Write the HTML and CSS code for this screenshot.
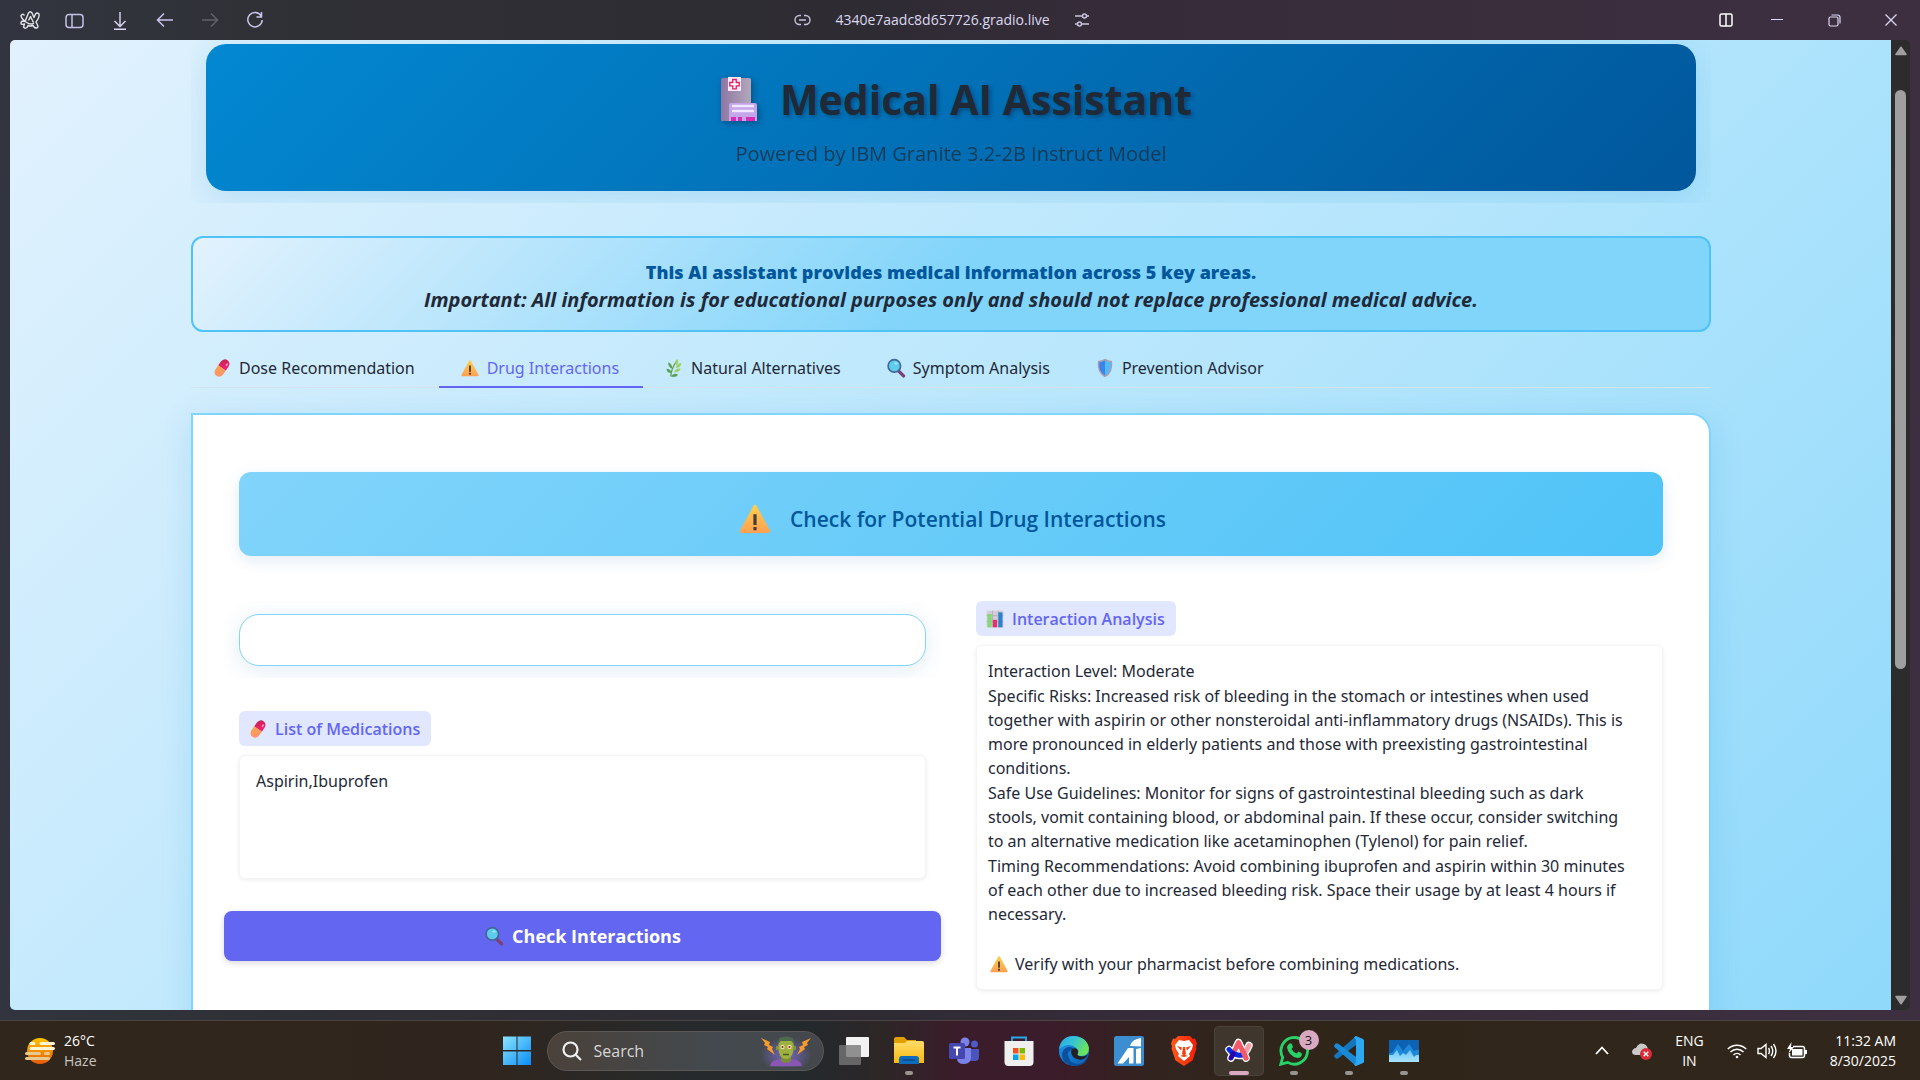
FILE: index.html
```html
<!DOCTYPE html>
<html lang="en">
<head>
<meta charset="utf-8">
<title>Medical AI Assistant</title>
<link rel="stylesheet" href="styles.css">
</head>
<body>
<svg class="sprite" aria-hidden="true">
  <defs>
    <linearGradient id="pillRed" x1="0" y1="0" x2="1" y2="1"><stop offset="0" stop-color="#b8274f"/><stop offset="1" stop-color="#ff1f74"/></linearGradient>
    <linearGradient id="pillOrange" x1="0" y1="0" x2="1" y2="1"><stop offset="0" stop-color="#f9a44a"/><stop offset="1" stop-color="#ff8f75"/></linearGradient>
    <linearGradient id="warn" x1="0" y1="0" x2="0" y2="1"><stop offset="0" stop-color="#fbd04f"/><stop offset="1" stop-color="#ffa050"/></linearGradient>
    <linearGradient id="win" x1="0" y1="0" x2="1" y2="1"><stop offset="0" stop-color="#8be4ff"/><stop offset="1" stop-color="#0a8cf5"/></linearGradient>
    <linearGradient id="sun" x1="0" y1="0" x2="0" y2="1"><stop offset="0" stop-color="#ffc400"/><stop offset="1" stop-color="#e65a08"/></linearGradient>
    <linearGradient id="folder" x1="0" y1="0" x2="0" y2="1"><stop offset="0" stop-color="#ffdc6b"/><stop offset="1" stop-color="#f7b80d"/></linearGradient>
    <linearGradient id="edgeTop" x1="0" y1="0" x2="1" y2="0.4"><stop offset="0" stop-color="#2aa6e4"/><stop offset="0.5" stop-color="#35c3d8"/><stop offset="1" stop-color="#6be35a"/></linearGradient>
    <linearGradient id="edgeLow" x1="0" y1="0" x2="1" y2="1"><stop offset="0" stop-color="#1d9bea"/><stop offset="1" stop-color="#0b5cb4"/></linearGradient>
    <linearGradient id="building" x1="0" y1="0" x2="1" y2="0"><stop offset="0" stop-color="#8d76a3"/><stop offset="1" stop-color="#b3a8bb"/></linearGradient>
    <linearGradient id="brave" x1="0" y1="0" x2="1" y2="0"><stop offset="0" stop-color="#ff5a1c"/><stop offset="1" stop-color="#f01c05"/></linearGradient>
    <linearGradient id="water" x1="0" y1="0" x2="0" y2="1"><stop offset="0" stop-color="#6cc8f8"/><stop offset="1" stop-color="#a9e4ff"/></linearGradient>
    <radialGradient id="glow"><stop offset="0" stop-color="#7a6ad0" stop-opacity="0.9"/><stop offset="1" stop-color="#7a6ad0" stop-opacity="0"/></radialGradient>
  </defs>
  <symbol id="i-pill" viewBox="0 0 24 24">
    <g transform="rotate(35 12 12)">
      <path d="M6.500 12V6a5.500 5.500 0 0 1 11 0V12z" fill="url(#pillRed)"/>
      <path d="M6.500 12v6a5.500 5.500 0 0 0 11 0V12z" fill="url(#pillOrange)"/>
      <ellipse cx="14.500" cy="5.500" rx="1.200" ry="2" fill="#ff8fb8"/>
    </g>
  </symbol>
  <symbol id="i-warn" viewBox="0 0 24 24">
    <path d="M10.800 3.500q1.200-2 2.400 0l9 16.500q.8 2-1.200 2H3q-2 0-1.200-2z" fill="url(#warn)"/>
    <path d="M10.900 9h2.200v7.500h-2.200zM10.900 17.800h2.200v2.200h-2.200z" fill="#4a3a3c"/>
  </symbol>
  <symbol id="i-herb" viewBox="0 0 24 24">
    <path d="M8 22Q9 12 15 4" fill="none" stroke="#6aa046" stroke-width="1.500"/>
    <g fill="#9ad05c"><path d="M15 9q-3-4 1-8 2 5-1 8zM14 12q2-6 7-6-1 6-7 6zM12 17q3-6 8-4-2 5-8 4z"/></g>
    <g fill="#58a05a"><path d="M10 13Q5 11 5 5q5 2 5 8zM9 18q-6 0-6-5 5 0 6 5zM8 22q4-5 9-2-3 4-9 2z"/></g>
  </symbol>
  <symbol id="i-search" viewBox="0 0 24 24">
    <path d="M15 15.500l6 6" stroke="#7c4076" stroke-width="4" stroke-linecap="round"/>
    <circle cx="10" cy="9.500" r="7.500" fill="#5fcbea" stroke="#44659a" stroke-width="2"/>
    <ellipse cx="12" cy="6.500" rx="2" ry="1.400" fill="#9be8f8"/>
  </symbol>
  <symbol id="i-shield" viewBox="0 0 24 24">
    <path d="M12 1q4 2.500 8.500 2.500 2 14-8.500 19.500Q1.500 17.500 3.500 3.500q4.500 0 8.500-2.500z" fill="#a79fb0"/>
    <path d="M12 3v18Q4 16.500 5 5q3.500 0 7-2z" fill="#3d83ec"/>
    <path d="M12 3v18q8-4.500 7-16-3.500 0-7-2z" fill="#54b9f8"/>
  </symbol>
  <symbol id="i-chart" viewBox="0 0 24 24">
    <path d="M2 2h20v20H2z" fill="#d4cdd8"/><path d="M2 8h20M2 15h20M9 2v20M16 2v20" stroke="#b4abb9"/>
    <path d="M3 6h5v16H3z" fill="#86d873"/><path d="M9.500 13h5v9h-5z" fill="#e8306c"/><path d="M16 4h5v18h-5z" fill="#2b83cf"/>
  </symbol>
</svg>

<div class="browser">
  <header class="toolbar">
    <nav class="tools" aria-label="Browser">
      <button class="tool" aria-label="Arc"><svg width="22" height="20" viewBox="0 0 22 20" fill="none" stroke="#e4e4ea" stroke-width="1.400" stroke-linejoin="round"><path d="M2 13.500q0-2.500 2-2.500l2 .5L9.500 3q1.700-2.500 3.500 0l2 4.500 1.500-3.500q1.500-2 3.500 0 .8 3-3 8l2 4q0 3-3.500 1.500L14 15.500q-3 1-5 0l-1 2q-2 1.500-3.500-.5l1-3Q2 15 2 13.500zM5.500 5.500Q4 3 2 5.500q0 3 5 6.500t8 1M9.500 10.500l2-4 3 6"/></svg></button>
      <button class="tool" aria-label="Sidebar"><svg width="20" height="20" viewBox="0 0 20 20" fill="none" stroke="#c5c0e6" stroke-width="1.500"><rect x="1" y="4.500" width="17" height="13" rx="3"/><path d="M7 4.500v13"/></svg></button>
      <button class="tool" aria-label="Downloads"><svg width="20" height="20" viewBox="0 0 20 20" fill="none" stroke="#dcd8f4" stroke-width="1.400"><path d="M10 2v14M4.500 11l5.500 5.500 5.500-5.500M4 19.300h12"/></svg></button>
      <button class="tool" aria-label="Back"><svg width="20" height="20" viewBox="0 0 20 20" fill="none" stroke="#c9c4ea" stroke-width="1.500"><path d="M18 10H3M9 3.500L2.500 10 9 16.500"/></svg></button>
      <button class="tool" aria-label="Forward" disabled><svg width="20" height="20" viewBox="0 0 20 20" fill="none" stroke="#62616b" stroke-width="1.500"><path d="M2 10h15M11 3.500l6.500 6.500-6.500 6.500"/></svg></button>
      <button class="tool" aria-label="Reload"><svg width="20" height="20" viewBox="0 0 20 20" fill="none" stroke="#c9c4ea" stroke-width="1.500"><path d="M16.200 6A7.200 7.200 0 1 0 17.200 10M16.500 2v5h-5"/></svg></button>
    </nav>
    <div class="address">
      <svg width="17" height="12" viewBox="0 0 17 12" fill="none" stroke="#c9c4dc" stroke-width="1.400"><path d="M7 1.500H5.500a4.500 4.500 0 0 0 0 9H7M10 1.500h1.500a4.500 4.500 0 0 1 0 9H10M5 6h7"/></svg>
      <span class="url">4340e7aadc8d657726.gradio.live</span>
      <svg width="16" height="14" viewBox="0 0 16 14" fill="none" stroke="#c9c4dc" stroke-width="1.500"><path d="M1 3h7M13 3h2M1 11h2M8 11h7"/><circle cx="10.500" cy="3" r="2"/><circle cx="5.500" cy="11" r="2"/></svg>
    </div>
    <div class="window-controls">
      <button class="tool split" aria-label="Split view"><svg width="14" height="14" viewBox="0 0 14 14" fill="none" stroke="#fff" stroke-width="1.500"><rect x="1" y="1" width="12" height="12" rx="1.500"/><path d="M7 1v12"/></svg></button>
      <button class="tool" aria-label="Minimize"><svg width="12" height="12" viewBox="0 0 12 12" stroke="#dcd8f4"><path d="M0 5.500h12"/></svg></button>
      <button class="tool" aria-label="Restore"><svg width="13" height="13" viewBox="0 0 13 13" fill="none" stroke="#dcd8f4" stroke-width="1.200"><rect x="1" y="3" width="9" height="9" rx="1.500"/><path d="M3.500 1h6q2.500 0 2.500 2.500v6"/></svg></button>
      <button class="tool" aria-label="Close"><svg width="12" height="12" viewBox="0 0 12 12" stroke="#dcd8f4" stroke-width="1.300"><path d="M.5.5l11 11M11.500.5l-11 11"/></svg></button>
    </div>
  </header>

  <div class="viewport">
    <main class="page">
      <div class="container">
        <div class="hero-wrap">
          <div class="hero">
            <h1 class="hero-title">
              <svg class="hospital" width="52" height="44" viewBox="-9 0 52 44">
                <path d="M2 3q0-2 2-2h26q2 0 2 2v41H2z" fill="url(#building)"/>
                <path d="M9 0h13v14H9z" fill="#f6e9fb"/>
                <path d="M13.800 2.500h3.400v3h3v3.400h-3v3h-3.400v-3h-3V5.500h3z" fill="#fff" stroke="#e5195a" stroke-width="1.300"/>
                <path d="M10 28q0-2 2-2h24q2 0 2 2v16H10z" fill="#c5a5ea"/>
                <path d="M13 29h22M13 34h22" stroke="#f0e6ff" stroke-width="2.500"/>
                <path d="M12 40h5v4h-5zM19 40h4v4h-4zM27 40h9v4h-9z" fill="#d92bb4"/>
              </svg>
              <span>Medical AI Assistant</span>
            </h1>
            <p class="hero-sub">Powered by IBM Granite 3.2-2B Instruct Model</p>
          </div>
        </div>

        <div class="notice">
          <strong class="notice-main">This AI assistant provides medical information across 5 key areas.</strong>
          <em class="notice-warn">Important: All information is for educational purposes only and should not replace professional medical advice.</em>
        </div>

        <div class="tabs" role="tablist">
          <button class="tab" role="tab"><svg class="emoji"><use href="#i-pill"/></svg>Dose Recommendation</button>
          <button class="tab active" role="tab" aria-selected="true"><svg class="emoji"><use href="#i-warn"/></svg>Drug Interactions</button>
          <button class="tab" role="tab"><svg class="emoji"><use href="#i-herb"/></svg>Natural Alternatives</button>
          <button class="tab" role="tab"><svg class="emoji"><use href="#i-search"/></svg>Symptom Analysis</button>
          <button class="tab" role="tab"><svg class="emoji"><use href="#i-shield"/></svg>Prevention Advisor</button>
        </div>

        <section class="panel" role="tabpanel">
          <h2 class="band"><svg class="band-icon"><use href="#i-warn"/></svg><span>Check for Potential Drug Interactions</span></h2>
          <div class="columns">
            <div class="column">
              <div class="group-wrap"><div class="group"></div></div>
              <div class="field">
                <label class="badge" for="meds"><svg class="emoji"><use href="#i-pill"/></svg>List of Medications</label>
                <textarea class="input" id="meds">Aspirin,Ibuprofen</textarea>
              </div>
              <button class="primary"><svg class="emoji"><use href="#i-search"/></svg>Check Interactions</button>
            </div>
            <div class="column">
              <div class="field result">
                <label class="badge" for="analysis"><svg class="emoji"><use href="#i-chart"/></svg>Interaction Analysis</label>
                <output class="output" id="analysis">
                  <span class="para">Interaction Level: Moderate</span>
                  <span class="para">Specific Risks: Increased risk of bleeding in the stomach or intestines when used together with aspirin or other nonsteroidal anti-inflammatory drugs (NSAIDs). This is more pronounced in elderly patients and those with preexisting gastrointestinal conditions.</span>
                  <span class="para">Safe Use Guidelines: Monitor for signs of gastrointestinal bleeding such as dark stools, vomit containing blood, or abdominal pain. If these occur, consider switching to an alternative medication like acetaminophen (Tylenol) for pain relief.</span>
                  <span class="para">Timing Recommendations: Avoid combining ibuprofen and aspirin within 30 minutes of each other due to increased bleeding risk. Space their usage by at least 4 hours if necessary.</span>
                  <span class="para verify"><svg class="emoji"><use href="#i-warn"/></svg>Verify with your pharmacist before combining medications.</span>
                </output>
              </div>
            </div>
          </div>
        </section>
      </div>
    </main>
    <div class="scrollbar" aria-hidden="true">
      <svg width="12" height="10" viewBox="0 0 12 10"><path d="M6 1.200l5 7.300H1z" fill="#9f9f9f" stroke="#9f9f9f" stroke-width="1.500" stroke-linejoin="round"/></svg>
      <div class="track"><div class="thumb"></div></div>
      <svg width="12" height="10" viewBox="0 0 12 10"><path d="M6 8.800l5-7.300H1z" fill="#9f9f9f" stroke="#9f9f9f" stroke-width="1.500" stroke-linejoin="round"/></svg>
    </div>
  </div>
</div>

<footer class="taskbar">
  <button class="weather">
    <svg width="30" height="28" viewBox="0 0 30 28"><circle cx="15" cy="14" r="13" fill="url(#sun)"/><g stroke-width="3" stroke-linecap="round"><path d="M6 6.500h3M16 6.500h12.500M6 11.500h22.500" stroke="#fff4d4"/><path d="M1.500 16.500h13M20.500 16.500h3M1.500 21.500h22" stroke="#e6c98c"/></g></svg>
    <span class="weather-text"><span>26°C</span><span class="dim">Haze</span></span>
  </button>

  <nav class="apps" aria-label="Taskbar">
    <button class="app" aria-label="Start"><svg width="30" height="30" viewBox="0 0 30 30"><path d="M1 .5h13.500V14H1zM15.500.5H29V14H15.500zM1 15.500h13.500V29H1zM15.500 15.500H29V29H15.500z" fill="url(#win)"/></svg></button>
    <div class="search">
      <svg width="20" height="20" viewBox="0 0 20 20" fill="none" stroke="#f0f0f0" stroke-width="2.200"><circle cx="8.500" cy="8.500" r="7"/><path d="M13.500 13.500L19 19"/></svg>
      <input class="search-input" type="text" aria-label="Search" placeholder="Search">
      <svg width="50" height="32" viewBox="0 0 50 32">
        <ellipse cx="25" cy="20" rx="26" ry="18" fill="url(#glow)"/>
        <path d="M9 31q1-7 12-7h8q11 0 12 7z" fill="#8a56b4"/>
        <path d="M20 18h10v8q-5 4-10 0z" fill="#7a8c35"/>
        <path d="M18 5q7-4 14 0l1 8-1.500 6q-2 5-6.500 5t-6.500-5L17 13z" fill="#a0b040"/>
        <path d="M17.500 9l.5-6q7-3 14 0l.5 6-2-3h-11z" fill="#4d6a4e"/>
        <path d="M15 11h2.500v4H15zM32.500 11H35v4h-2.500z" fill="#7f9436"/>
        <circle cx="21.500" cy="12" r="2.200" fill="#e9e0b0"/><circle cx="28.500" cy="12" r="2.200" fill="#e9e0b0"/><circle cx="21.500" cy="12" r="1" fill="#8a2b20"/><circle cx="28.500" cy="12" r="1" fill="#8a2b20"/>
        <path d="M22 19.500h6" stroke="#4d5a20" stroke-width="1.500"/>
        <path d="M0 3l9 4-1 3 4 2-1 2 3 6-8-6 1-2-4-2 1-2zM50 3l-9 4 1 3-4 2 1 2-3 6 8-6-1-2 4-2-1-2z" fill="#f79a2c"/>
      </svg>
    </div>
    <button class="app" aria-label="Task view"><svg width="30" height="28" viewBox="0 0 30 28"><rect x="7" width="23" height="20" rx="1" fill="#f2f2f2"/><rect y="8" width="22" height="20" rx="1" fill="#777" fill-opacity=".8"/></svg></button>
    <button class="app running" aria-label="File Explorer"><svg width="30" height="28" viewBox="0 0 30 28"><path d="M0 2q0-2 2-2h8l3 3h9v6H0z" fill="#dfa000"/><path d="M0 6h11l2-2h15q2 0 2 2v20H0z" fill="url(#folder)"/><path d="M5 27v-5q0-3 3-3h14q3 0 3 3v5z" fill="#0f6cbd"/><path d="M9 23h12" stroke="#0a4a86" stroke-width="1.500"/></svg></button>
    <button class="app" aria-label="Teams"><svg width="30" height="28" viewBox="0 0 30 28"><circle cx="25.500" cy="7" r="3.500" fill="#5059c9"/><path d="M20 12h10v8q0 4-4 4h-6z" fill="#4b53bc"/><circle cx="16" cy="5" r="4.500" fill="#7b83eb"/><path d="M8 11h14v9q0 7-7 7t-7-6z" fill="#7b83eb"/><rect y="6" width="16" height="16" rx="1.500" fill="#4448b0"/><path d="M4.500 10.500h7M8 10.500v8" stroke="#fff" stroke-width="2"/></svg></button>
    <button class="app" aria-label="Microsoft Store"><svg width="30" height="30" viewBox="0 0 30 30"><path d="M8 6V1.500h14V6" fill="none" stroke="#29a9ea" stroke-width="1.800"/><path d="M.5 5h29v21q0 4-4 4h-21q-4 0-4-4z" fill="#efefef"/><path d="M9 12h5.500v5.500H9z" fill="#f05022"/><path d="M15.500 12H21v5.500h-5.500z" fill="#7fba00"/><path d="M9 18.500h5.500V24H9z" fill="#00a4ef"/><path d="M15.500 18.500H21V24h-5.500z" fill="#ffb900"/></svg></button>
    <button class="app" aria-label="Edge"><svg width="30" height="30" viewBox="0 0 30 30"><circle cx="15" cy="15" r="15" fill="url(#edgeLow)"/><path d="M9 17q0 10 9 11 6 0 10-4-4 6-13 6Q3 28 3 19q0-6 6-8 6 0 8 3-6-1-8 3z" fill="#0c4f9e"/><path d="M0 13Q2 0 15 0q13 1 15 12 0 8-8 8-5 0-4-3 2-3-2-6-7-5-16 2z" fill="url(#edgeTop)"/><path d="M12 15q2-4 6-2 2 2 1 4-2 3 4 3.500 4 0 6-2-3 6-9 5-8-1-8-8.500z" fill="#241f24"/></svg></button>
    <button class="app" aria-label="Analytics"><svg width="30" height="30" viewBox="0 0 30 30"><rect width="30" height="30" rx="2.500" fill="#3d8ed0"/><path d="M16 10q2-7 11-8v8.500zM3.500 27.500L14 12h5.500v15.500H15V21L9 27.500zM22 13l5-1v15.500h-5z" fill="#fff"/></svg></button>
    <button class="app" aria-label="Brave"><svg width="26" height="30" viewBox="0 0 26 30"><path d="M7 0h12l3 3 2-.5 2 5-1 3 .5 2-4 12-8.500 5.500L4.500 24.500l-4-12 .5-2-1-3 2-5 2 .5z" fill="url(#brave)"/><path d="M8 4l5 1 5-1 4 5-1 4-3 5 1 2-6 5-6-5 1-2-3-5-1-4z" fill="#fff"/><path d="M6 10l5 1.500-1 3zM20 10l-5 1.500 1 3zM12 11h2l1 7-2 1.500-2-1.500zM9 20l4-1.500 4 1.500-4 1z" fill="#f4400f"/></svg></button>
    <button class="app current" aria-label="Arc"><svg width="28" height="25" viewBox="0 0 28 25" fill="none" stroke-linecap="round" stroke-linejoin="round"><path d="M6 20L13.500 4.500 21 20M4 11.500q4 6 10 6 6 0 10-10" stroke="#fff" stroke-width="7.500"/><path d="M14 17.500Q20 17 24 7.500" stroke="#f99ba2" stroke-width="5"/><path d="M8.500 15L13.500 4.500 21 20" stroke="#f4596b" stroke-width="5"/><path d="M4 11.500q5 6.500 13 5.500" stroke="#0a2be0" stroke-width="5"/><path d="M8 16L6 20" stroke="#2a06a8" stroke-width="5"/><path d="M17.500 12.500L21 20" stroke="#f4596b" stroke-width="5"/></svg></button>
    <button class="app running" aria-label="WhatsApp, 3 unread"><svg width="30" height="30" viewBox="0 0 30 30"><path d="M1.800 28.200l1.900-6.800a13.300 13.300 0 1 1 5 5z" fill="none" stroke="#27d366" stroke-width="2.800"/><path d="M10 8q2-1.500 3 .5l1 2.500-1.500 2q1.500 3 5 4.500l2-2q3 1 3.500 2.500-.5 4-4.500 4-9-2-10.500-10.500Q8 9.500 10 8z" fill="#27d366"/></svg><span class="count">3</span></button>
    <button class="app running" aria-label="Visual Studio Code"><svg width="30" height="30" viewBox="0 0 30 30"><path d="M22 0v9L4 22.500q-1.500.8-2.500-.3L.5 21q-1-1.200.2-2.300z" fill="#1476bd"/><path d="M22 30v-9L4 7.500Q2.500 6.700 1.500 7.800L.5 9q-1 1.200.2 2.300z" fill="#1b8ad6"/><path d="M22 0l7 3q1 .5 1 1.500v21q0 1-1 1.500l-7 3q-1 0-2-1.500l2-2V3.500l-2-2Q21 0 22 0z" fill="#2da9f2"/></svg></button>
    <button class="app running" aria-label="Performance Monitor"><svg width="30" height="22" viewBox="0 0 30 22"><path d="M0 0h30v22H0z" fill="#0d62b4"/><path d="M0 13h3l6-9 5 7 6-7 5 7 2-1h3v12H0z" fill="#1e88d8"/><path d="M0 15h4l4-5 3 6 3-3 3 2 4-5 4 7 2-2h3v7H0z" fill="url(#water)"/></svg></button>
  </nav>

  <div class="tray">
    <button class="tray-item" aria-label="Hidden icons"><svg width="14" height="9" viewBox="0 0 14 9" fill="none" stroke="#fff" stroke-width="1.800"><path d="M1 8l6-6.500L13 8"/></svg></button>
    <button class="tray-item" aria-label="OneDrive"><svg width="20" height="18" viewBox="0 0 20 18"><path d="M4 13Q0 13 0 9.500 1 6 4 6 7 0 12 2q3 1 4 5v6z" fill="#c9c9c9"/><circle cx="14" cy="12" r="6" fill="#d92c38"/><path d="M11.700 9.700l4.600 4.600M16.300 9.700l-4.600 4.600" stroke="#fff" stroke-width="1.300"/></svg></button>
    <button class="tray-item lang"><span>ENG</span><span>IN</span></button>
    <button class="tray-item system" aria-label="Network, volume and battery">
      <svg width="20" height="16" viewBox="0 0 20 16" fill="none" stroke="#fff" stroke-width="1.500"><path d="M.8 6a13 13 0 0 1 18.400 0M3.500 9a9 9 0 0 1 13 0M6.500 12a5 5 0 0 1 7 0"/><circle cx="10" cy="14" r="1.300" fill="#fff" stroke="none"/></svg>
      <svg width="20" height="18" viewBox="0 0 20 18" fill="none" stroke="#fff" stroke-width="1.400"><path d="M1 6.500v5h3l5 4v-13l-5 4zM11.500 6q2 3 0 6M14 4q3.500 5 0 10M16.500 2q5 7 0 14"/></svg>
      <svg width="20" height="18" viewBox="0 0 20 18"><path d="M6 4.500h9.500q2 0 2 2v7q0 2-2 2h-11q-2 0-2-2V11" fill="none" stroke="#fff" stroke-width="1.500"/><path d="M5 7h10.500v6.500H5zM18 8h2v4h-2z" fill="#fff"/><path d="M4.500 0L0 7h3l-1.500 4.500L7 5H4z" fill="#fff"/></svg>
    </button>
    <button class="tray-item clock"><span>11:32 AM</span><span>8/30/2025</span></button>
  </div>
</footer>
</body>
</html>
```
FILE: styles.css
```css
* { box-sizing: border-box; }

body {
  margin: 0;
  height: 100vh;
  display: flex;
  flex-direction: column;
  overflow: hidden;
  font-family: "Open Sans", "Noto Sans", sans-serif;
  font-size: 16px;
  color: #1f2937;
}

button, input, textarea { font: inherit; color: inherit; }
button { border: 0; padding: 0; background: none; }
h1, h2, p { margin: 0; }
svg { display: block; flex: none; }
.sprite { width: 0; height: 0; position: absolute; }
.emoji { width: 20px; height: 20px; }

/* Browser window */
.browser {
  flex: 1;
  min-height: 0;
  display: flex;
  flex-direction: column;
  padding: 0 10px 10px;
  background: linear-gradient(90deg, #32353f 0%, #2f3035 16%, #2e2b33 45%, #362c39 60%, #3d2f40 100%);
}

.toolbar {
  height: 40px;
  flex: none;
  display: grid;
  grid-template-columns: 1fr auto 1fr;
  align-items: center;
}

.tools { display: flex; gap: 25px; padding-left: 10px; }
.tool { display: flex; align-items: center; justify-content: center; width: 20px; height: 40px; }
.address { display: flex; align-items: center; gap: 24px; padding-right: 36px; }
.url { color: #dcd8f0; font-size: 14px; line-height: 20px; }
.window-controls { display: flex; justify-content: flex-end; gap: 37px; padding-right: 9px; }
.split { margin-right: -6px; }

.viewport {
  flex: 1;
  min-height: 0;
  display: flex;
  overflow: hidden;
  border-radius: 5px;
}

.page {
  flex: 1;
  min-width: 0;
  overflow: hidden;
  background: linear-gradient(135deg, #e3f2fd 0%, #b3e5fc 50%, #81d4fa 100%) 0 -55px / 100% 1500px;
}

.container { padding: 0 180px 0 181px; }

.scrollbar {
  width: 19px;
  display: flex;
  flex-direction: column;
  align-items: center;
  padding: 6px 0 5px;
  background: #2c2c2c;
}
.track { flex: 1; padding-top: 34px; }
.thumb { width: 11px; height: 64%; border-radius: 6px; background: #9f9f9f; }

/* Header */
.hero-wrap { padding: 4px 15px 12px; overflow: hidden; }
.hero {
  padding: 24px 20px 21px;
  border-radius: 20px;
  background: linear-gradient(135deg, #0288d1, #01579b);
  box-shadow: 0 8px 32px rgba(2, 136, 209, 0.15);
  text-align: center;
}
.hero-title {
  display: flex;
  justify-content: center;
  align-items: center;
  gap: 18px;
  font-size: 41px;
  line-height: 62px;
  text-shadow: 2px 2px 4px rgba(0, 0, 0, 0.3);
}
.hospital { filter: drop-shadow(2px 2px 3px rgba(0, 0, 0, 0.3)); }
.hero-sub { padding-top: 8px; font-size: 20px; line-height: 32px; opacity: 0.75; }

.notice {
  margin-top: 33px;
  padding: 20px 20px 16px;
  border: 2px solid #4fc3f7;
  border-radius: 12px;
  background: linear-gradient(135deg, #e3f2fd 0%, #81d4fa 50%);
  line-height: 28px;
  font-weight: 700;
  text-align: center;
}
.notice-main, .notice-warn { display: block; }
.notice-main { color: #01579b; font-size: 18px; }
.notice-warn { font-size: 20px; }

/* Tabs */
.tabs {
  display: flex;
  margin-top: 16px;
  box-shadow: inset 0 -1px #d5e2ee;
}
.tab {
  display: flex;
  align-items: center;
  gap: 7px;
  height: 40px;
  padding: 2px 24px 0 21px;
  border-bottom: 2px solid transparent;
  font-family: "Noto Sans", "Open Sans", sans-serif;
  font-size: 16px;
}
.tab.active { color: #6366f1; border-bottom-color: #6366f1; }

/* Tab panel */
.panel {
  margin-top: 25px;
  min-height: 800px;
  padding: 57px 31px 40px;
  border: 2px solid #81d4fa;
  border-radius: 0 20px 20px 20px;
  background: #fff;
  box-shadow: 0 8px 32px rgba(2, 136, 209, 0.15);
}
.band {
  display: flex;
  align-items: center;
  justify-content: center;
  gap: 16px;
  height: 84px;
  margin: 0 15px;
  padding-top: 9px;
  border-radius: 12px;
  background: linear-gradient(135deg, #81d4fa, #4fc3f7);
  box-shadow: 0 4px 16px rgba(1, 87, 155, 0.12);
  color: #01579b;
  font-size: 21px;
  font-weight: 600;
}
.band-icon { width: 38px; height: 35px; }

.columns { display: grid; grid-template-columns: 1fr 1fr; gap: 20px; padding-top: 45px; }
.column { display: flex; flex-direction: column; min-width: 0; }

.group-wrap { padding: 13px 15px 12px; overflow: hidden; }
.group {
  height: 52px;
  border: 1px solid #81d4fa;
  border-radius: 20px;
  background: #fff;
  box-shadow: 0 4px 24px rgba(2, 100, 180, 0.12);
}

.field { display: flex; flex-direction: column; align-items: flex-start; gap: 9px; padding: 0 15px; }
.column > .group-wrap + .field { padding-top: 33px; }

.badge {
  display: flex;
  align-items: center;
  gap: 7px;
  height: 35px;
  padding: 0 11px 0 9px;
  border-radius: 6px;
  background: #e0e7ff;
  color: #6366f1;
  font-size: 16px;
  font-weight: 600;
}

.input, .output {
  display: block;
  width: 100%;
  border: 1px solid #f5f5f7;
  border-radius: 6px;
  background: #fff;
  box-shadow: 0 1px 4px rgba(0, 0, 0, 0.08);
  font-family: "Noto Sans", "Open Sans", sans-serif;
  font-size: 16px;
  line-height: 24px;
}
.input { height: 124px; padding: 13px 16px; resize: none; }
.output { padding: 13px 31px 13px 11px; }
.para { display: block; margin-bottom: 1px; }
.para.verify { display: flex; align-items: center; gap: 6px; margin: 26px 0 0 1px; }

.primary {
  display: flex;
  align-items: center;
  justify-content: center;
  gap: 8px;
  height: 50px;
  margin-top: 32px;
  border-radius: 8px;
  background: #6366f1;
  box-shadow: 0 2px 6px rgba(0, 0, 0, 0.15);
  color: #fff;
  font-size: 18px;
  font-weight: 700;
}

/* Taskbar */
.taskbar {
  height: 60px;
  flex: none;
  display: grid;
  grid-template-columns: 1fr auto 1fr;
  align-items: center;
  border-top: 1px solid #4a4444;
  background: linear-gradient(90deg, #30261b 0%, #30251e 25%, #262a2c 36%, #24292c 42%, #2d2627 46%, #3b1c2a 50%, #3b1c2a 55%, #32231f 60%, #2f2519 68%, #30261b 100%);
  color: #fff;
  font-size: 14px;
  line-height: 20px;
}

.weather { display: flex; align-items: center; gap: 9px; padding-left: 25px; text-align: left; }
.weather-text { display: flex; flex-direction: column; }
.dim { color: #c8c4c0; }

.apps { display: flex; align-items: center; gap: 5px; }
.app {
  position: relative;
  display: flex;
  align-items: center;
  justify-content: center;
  width: 50px;
  height: 50px;
  border-radius: 5px;
}
.app.running::after, .app.current::after {
  content: "";
  position: absolute;
  left: 50%;
  bottom: 1px;
  width: 8px;
  height: 4px;
  margin-left: -4px;
  border-radius: 2px;
  background: #9a9490;
}
.app.current { background: #3f362d; box-shadow: inset 0 0 0 1px #4a4138; }
.app.current::after { width: 20px; margin-left: -10px; background: #d9a9c2; }
.count {
  position: absolute;
  top: 4px;
  right: 0;
  width: 20px;
  height: 20px;
  border-radius: 50%;
  background: #d9a9c2;
  color: #1d1418;
  font-size: 13px;
  line-height: 20px;
}

.search {
  display: flex;
  align-items: center;
  gap: 12px;
  width: 277px;
  height: 40px;
  padding: 0 12px 0 14px;
  border: 1px solid #5c5855;
  border-radius: 20px;
  background: linear-gradient(90deg, #4a413a, #43494e 60%, #44484c);
}
.search-input {
  flex: 1;
  min-width: 0;
  padding: 0;
  border: 0;
  outline: 0;
  background: none;
  font-size: 16px;
}
.search-input::placeholder { color: #d8d6d4; opacity: 1; }

.tray { display: flex; align-items: center; justify-content: flex-end; padding-right: 24px; }
.tray-item { display: flex; align-items: center; }
.tray-item + .tray-item { margin-left: 23px; }
.lang { flex-direction: column; }
.system { gap: 10px; }
.clock { flex-direction: column; align-items: flex-end; }
```
